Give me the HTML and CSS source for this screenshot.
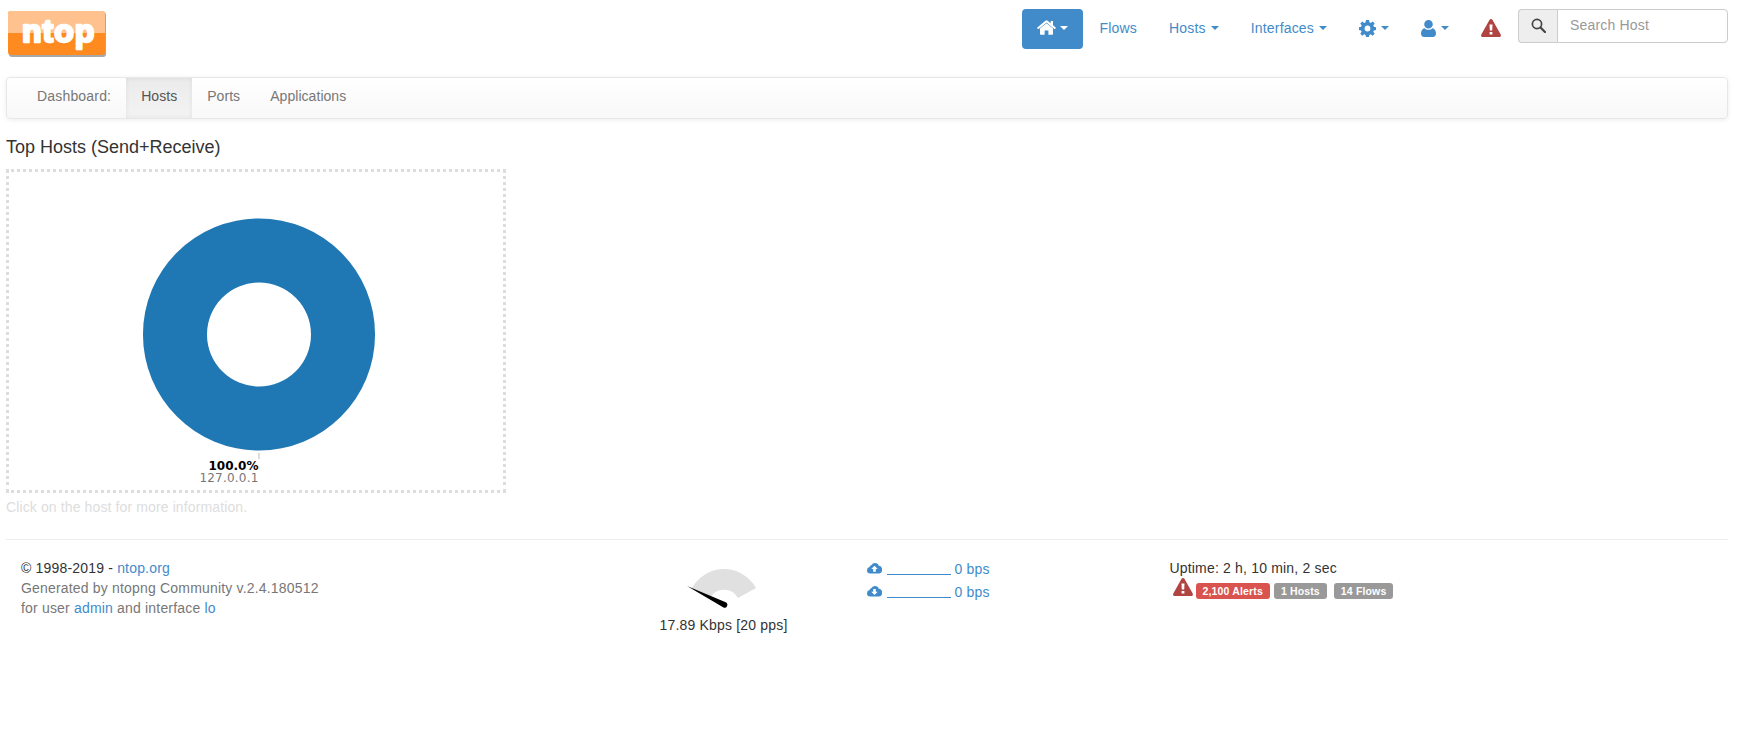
FILE: index.html
```html
<!DOCTYPE html>
<html lang="en">
<head>
    <meta charset="UTF-8">
    <title>Top Hosts</title>
    <link rel="stylesheet" href="styles.css">
</head>
<body>
    <header class="topbar">
        <a class="logo" href="#">
            <svg width="102" height="50" viewBox="0 0 102 50">
                <rect x="3" y="2" width="97" height="45" rx="3" fill="#a8a8a8"/>
                <rect x="2" y="1" width="97" height="44" rx="3" fill="#ff8a1f"/>
                <path d="M2 23V4a3 3 0 0 1 3-3h91a3 3 0 0 1 3 3v19z" fill="#ffc28e"/>
                <text class="logo-text" x="16" y="32">ntop</text>
            </svg>
        </a>
        <ul class="mainnav">
            <li class="active"><a href="#">
                <svg class="icon" width="19" height="16" viewBox="0 0 19 16"><path fill="currentColor" d="M9.500 3.200 3 8.600V14a.7.7 0 0 0 .7.7h3.900v-4.200h3.800v4.200h3.900A.7.7 0 0 0 16 14V8.600zM18.700 7.500 16 5.200V1h-2.300v2.300L10.600.7a1.700 1.700 0 0 0-2.200 0L.3 7.500a.5.5 0 0 0 0 .7l.7.8c.2.2.5.2.7 0l7.800-6.500 7.800 6.500c.2.2.5.2.7 0l.7-.8a.5.5 0 0 0 0-.7z"/></svg>
                <span class="caret"></span></a></li>
            <li><a href="#">Flows</a></li>
            <li><a href="#">Hosts <span class="caret"></span></a></li>
            <li><a href="#">Interfaces <span class="caret"></span></a></li>
            <li><a href="#">
                <svg class="icon" width="17" height="17" viewBox="0 0 17 17"><path fill="currentColor" fill-rule="evenodd" d="M7 0h3l.4 2.300 1.400.6L13.700 1.500l2 2-1.400 1.900.6 1.400L17 7.200v2.800l-2.100.4-.6 1.400 1.300 1.900-2 2-1.900-1.400-1.400.6L10 17H7l-.4-2.100-1.400-.6-1.900 1.400-2-2 1.300-1.900-.6-1.400L0 10V7.200l2.100-.4.6-1.400-1.400-1.900 2-2 1.900 1.400 1.400-.6zM8.500 5.600a2.900 2.900 0 1 0 0 5.800 2.900 2.900 0 0 0 0-5.800z"/></svg>
                <span class="caret"></span></a></li>
            <li><a href="#">
                <svg class="icon" width="15" height="17" viewBox="0 0 15 17"><path fill="currentColor" d="M7.500 0a4.300 4.300 0 1 1 0 8.600 4.300 4.300 0 0 1 0-8.600zM3.500 8.200c1 1 2.500 1.500 4 1.500s3-.5 4-1.500c2 .4 3.500 2.500 3.500 5.300 0 2.200-1.300 3.500-3 3.500H3c-1.700 0-3-1.300-3-3.500 0-2.800 1.500-4.900 3.500-5.300z"/></svg>
                <span class="caret"></span></a></li>
            <li><a href="#">
                <svg class="icon" width="20" height="18" viewBox="0 0 20 18"><path fill="#b04442" fill-rule="evenodd" d="M10 0c.6 0 1.100.3 1.400.8l8.300 14.800c.6 1.100-.2 2.400-1.400 2.400H1.700C.5 18-.3 16.700.3 15.600L8.600.8C8.900.3 9.400 0 10 0zM8.500 5.500l.3 6h2.400l.3-6zM8.600 13v2.500h2.800V13z"/></svg></a></li>
        </ul>
        <form class="search">
            <span class="search-addon">
                <svg width="15" height="15" viewBox="0 0 15 15"><circle cx="6" cy="6" r="4.600" fill="none" stroke="#444" stroke-width="1.700"/><path d="M9.500 9.500 14 14" stroke="#444" stroke-width="2.200" stroke-linecap="round"/></svg>
            </span>
            <input class="search-input" type="text" placeholder="Search Host">
        </form>
    </header>

    <nav class="subnav">
        <span class="subnav-title">Dashboard:</span>
        <a class="subnav-item current" href="#">Hosts</a>
        <a class="subnav-item" href="#">Ports</a>
        <a class="subnav-item" href="#">Applications</a>
    </nav>

    <h4 class="section-title">Top Hosts (Send+Receive)</h4>

    <div class="chart-box">
        <svg width="494" height="318" viewBox="0 0 494 318">
            <path fill="#1f77b4" fill-rule="evenodd" d="M250 46.500a116 116 0 1 1 0 232a116 116 0 1 1 0-232zM250 110.500a52 52 0 1 0 0 104a52 52 0 1 0 0-104z"/>
            <line x1="250" y1="281" x2="250" y2="287" stroke="#bbb" stroke-width="1"/>
            <text class="pie-value" x="249.500" y="298" text-anchor="end">100.0%</text>
            <text class="pie-label" x="249.500" y="310" text-anchor="end">127.0.0.1</text>
        </svg>
    </div>
    <p class="chart-hint">Click on the host for more information.</p>

    <hr class="divider">

    <footer class="footer">
        <div class="foot-about">
            <div class="dark">© 1998-2019 - <a href="#">ntop.org</a></div>
            <div>Generated by ntopng Community v.2.4.180512</div>
            <div>for user <a href="#">admin</a> and interface <a href="#">lo</a></div>
        </div>
        <div class="foot-gauge">
            <svg width="80" height="46" viewBox="-40 -38 80 46">
                <path fill="#e0e0e0" d="M-32-18A36.500 36.500 0 0 1 32-18L14-8A16 16 0 0 0-14-8z"/>
                <path fill="#000" d="M-37-20 2.300-3.500a2.900 2.900 0 0 1-2.800 5z"/>
            </svg>
            <div class="gauge-text">17.89 Kbps [20 pps]</div>
        </div>
        <div class="foot-traffic">
            <div class="traffic-row">
                <svg class="cloud" width="15" height="12" viewBox="0 0 15 12"><path fill="#428bca" fill-rule="evenodd" d="M8 0a4 4 0 0 1 3.800 2.800A3.200 3.200 0 0 1 15 6.500 3.300 3.300 0 0 1 12 10.500H3.300A3.300 3.300 0 0 1 0 7.200a3.200 3.200 0 0 1 2.500-3.100A3.300 3.300 0 0 1 4.500 2 4 4 0 0 1 8 0zM7.500 2.800 4.300 6H6.200v2.800h2.600V6h1.900z"/></svg>
                <a href="#"><span class="spark"></span> 0 bps</a>
            </div>
            <div class="traffic-row">
                <svg class="cloud" width="15" height="12" viewBox="0 0 15 12"><path fill="#428bca" fill-rule="evenodd" d="M8 0a4 4 0 0 1 3.800 2.800A3.200 3.200 0 0 1 15 6.500 3.300 3.300 0 0 1 12 10.500H3.300A3.300 3.300 0 0 1 0 7.200a3.200 3.200 0 0 1 2.500-3.100A3.300 3.300 0 0 1 4.500 2 4 4 0 0 1 8 0zM7.500 9 10.700 5.800H8.800V3H6.200v2.800H4.300z"/></svg>
                <a href="#"><span class="spark"></span> 0 bps</a>
            </div>
        </div>
        <div class="foot-status">
            <div class="dark">Uptime: 2 h, 10 min, 2 sec</div>
            <div class="badges">
                <svg class="badge-warn" width="20" height="18" viewBox="0 0 20 18"><path fill="#b04442" fill-rule="evenodd" d="M10 0c.6 0 1.100.3 1.400.8l8.300 14.800c.6 1.100-.2 2.400-1.400 2.400H1.700C.5 18-.3 16.700.3 15.600L8.600.8C8.900.3 9.400 0 10 0zM8.500 5.500l.3 6h2.400l.3-6zM8.600 13v2.500h2.800V13z"/></svg>
                <span class="label red">2,100 Alerts</span>
                <span class="label grey">1 Hosts</span>
                <span class="label grey gap">14 Flows</span>
            </div>
        </div>
    </footer>
</body>
</html>
```

FILE: styles.css
```css
* {
    box-sizing: border-box;
}
body {
    margin: 0;
    padding: 0 20px 0 6px;
    font-family: "Liberation Sans", Arial, sans-serif;
    font-size: 14px;
    line-height: 20px;
    letter-spacing: 0.18px;
    color: #333;
    background-color: #fff;
}
a {
    color: #428bca;
    text-decoration: none;
}

/* top bar */
.topbar {
    display: flex;
    align-items: flex-start;
    height: 77px;
}
.logo {
    display: block;
    height: 50px;
    margin-top: 10px;
}
.logo svg {
    display: block;
}
.logo-text {
    font-family: "Liberation Sans", sans-serif;
    font-weight: bold;
    font-size: 32px;
    letter-spacing: 1px;
    fill: #fff;
    stroke: #fff;
    stroke-width: 2.500px;
    stroke-linejoin: round;
}
.mainnav {
    display: flex;
    gap: 2px;
    list-style: none;
    margin: 9px 0 0 auto;
    padding: 0;
}
.mainnav a {
    display: flex;
    align-items: center;
    gap: 5px;
    height: 40px;
    padding: 0 15px 2px;
    border-radius: 4px;
}
.mainnav .active a {
    gap: 4px;
    color: #fff;
    background-color: #428bca;
}
.caret {
    display: inline-block;
    width: 0;
    height: 0;
    border-top: 4px solid;
    border-left: 4px solid transparent;
    border-right: 4px solid transparent;
}
.search {
    display: flex;
    width: 210px;
    height: 34px;
    margin: 9px 0 0 2px;
}
.search-addon {
    display: flex;
    align-items: center;
    justify-content: center;
    width: 39px;
    padding-bottom: 2px;
    background-color: #eee;
    border: 1px solid #ccc;
    border-right: 0;
    border-radius: 4px 0 0 4px;
}
.search-input {
    flex: 1;
    min-width: 0;
    padding: 0 12px 2px;
    margin: 0;
    font: 14px/20px "Liberation Sans", Arial, sans-serif;
    letter-spacing: 0.18px;
    color: #555;
    border: 1px solid #ccc;
    border-radius: 0 4px 4px 0;
    outline: none;
}
.search-input::placeholder {
    color: #999;
}

/* dashboard navbar */
.subnav {
    display: flex;
    height: 42px;
    border: 1px solid #e7e7e7;
    border-radius: 4px;
    background: linear-gradient(#fff, #f8f8f8);
    box-shadow: 0 1px 5px rgba(0, 0, 0, 0.075);
    color: #777;
}
.subnav-title {
    padding: 8px 15px 12px 30px;
}
.subnav-item {
    padding: 8px 15px 12px;
    letter-spacing: 0.05px;
    color: #777;
}
.subnav-item.current {
    color: #555;
    background: linear-gradient(#ebebeb, #f3f3f3);
    box-shadow: inset 0 0 5px rgba(0, 0, 0, 0.075);
}

/* chart */
.section-title {
    margin: 18px 0 12px;
    font-size: 18px;
    line-height: 20px;
    font-weight: 500;
    letter-spacing: 0;
}
.chart-box {
    width: 500px;
    height: 324px;
    border: 3px dotted #ddd;
}
.chart-box svg {
    display: block;
}
.pie-value {
    font: bold 12px "DejaVu Sans", sans-serif;
    letter-spacing: 0;
    fill: #000;
}
.pie-label {
    font: 12px "DejaVu Sans", sans-serif;
    letter-spacing: 0.2px;
    fill: #777;
}
.chart-hint {
    margin: 4px 0 0;
    letter-spacing: 0.12px;
    color: #ddd;
}

/* footer */
.divider {
    margin: 22px 0 0;
    border: 0;
    border-top: 1px solid #eee;
}
.footer {
    display: flex;
    padding-top: 18px;
    color: #777;
}
.dark {
    color: #333;
}
.foot-about {
    width: 646.500px;
    padding-left: 15px;
}
.foot-gauge {
    display: flex;
    flex-direction: column;
    align-items: flex-start;
    width: 214px;
    margin-top: 10px;
}
.foot-gauge svg {
    display: block;
    margin-left: 31px;
}
.gauge-text {
    width: 142px;
    margin-top: 1px;
    text-align: center;
    color: #333;
}
.foot-traffic {
    width: 303px;
    padding-top: 1px;
}
.traffic-row {
    display: flex;
    align-items: center;
    gap: 5px;
    height: 20px;
    margin-bottom: 3px;
}
.spark {
    display: inline-block;
    width: 64px;
    height: 9px;
    border-bottom: 1px solid #428bca;
    vertical-align: -1px;
}
.badges {
    display: flex;
    align-items: flex-start;
}
.badge-warn {
    margin: 0 3px 0 3px;
}
.label {
    height: 16px;
    margin: 5px 4px 0 0;
    padding: 2px 7px;
    font-size: 10.500px;
    font-weight: bold;
    line-height: 12px;
    letter-spacing: 0.15px;
    color: #fff;
    border-radius: 3px;
}
.label.gap {
    margin-left: 3px;
}
.red {
    background-color: #d9534f;
}
.grey {
    background-color: #999;
}
```
